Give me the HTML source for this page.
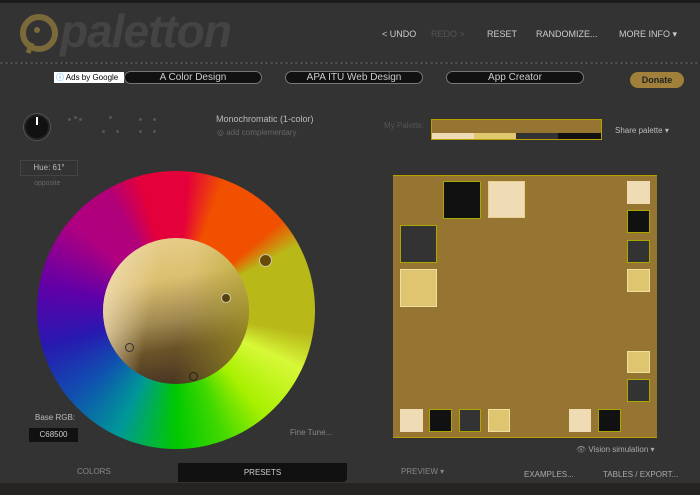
<!DOCTYPE html>
<html><head><style>
*{margin:0;padding:0;box-sizing:border-box}
body{width:700px;height:495px;background:#333;font-family:"Liberation Sans",sans-serif;position:relative;overflow:hidden;color:#bbb}
.a{position:absolute}
.nav{font-size:9px;color:#ccc;top:29px}
.pill{position:absolute;top:71px;height:13px;background:#111;border:1px solid #777;border-radius:7px;color:#ccc;font-size:10px;text-align:center;line-height:11px}
.sq{position:absolute;border:1px solid #a8a800}
.dot{position:absolute;width:3px;height:3px;border-radius:50%;background:#555}
</style></head><body>
<div class="a" style="left:0;top:0;width:700px;height:3px;background:#1c1c1c"></div>
<div class="a" style="left:0;top:62px;width:700px;height:2px;background:repeating-linear-gradient(90deg,#4a4a4a 0 3px,#2a2a2a 3px 5px)"></div>
<svg class="a" style="left:18px;top:13px" width="42" height="42"><circle cx="21" cy="20" r="16" fill="none" stroke="#7a6a3a" stroke-width="6"/><circle cx="19" cy="17" r="3" fill="#7a6a3a"/><path d="M14 30 L10 40" stroke="#7a6a3a" stroke-width="5"/></svg>
<div class="a" style="left:60px;top:4px;font-size:46px;font-weight:bold;font-style:italic;color:#444;letter-spacing:-1px">paletton</div>
<div class="a nav" style="left:382px">&lt; UNDO</div>
<div class="a nav" style="left:431px;color:#555">REDO &gt;</div>
<div class="a nav" style="left:487px">RESET</div>
<div class="a nav" style="left:536px">RANDOMIZE...</div>
<div class="a nav" style="left:619px">MORE INFO ▾</div>
<div class="a" style="left:54px;top:72px;width:70px;height:11px;background:#fff;color:#000;font-size:8px;line-height:11px;padding-left:2px"><span style="color:#29f">ⓘ</span> Ads by Google</div>
<div class="pill" style="left:124px;width:138px">A Color Design</div>
<div class="pill" style="left:285px;width:138px">APA ITU Web Design</div>
<div class="pill" style="left:446px;width:138px">App Creator</div>
<div class="a" style="left:630px;top:72px;width:54px;height:16px;background:#a0803a;border-radius:8px;color:#222;font-size:9px;font-weight:bold;text-align:center;line-height:16px">Donate</div>
<div class="a" style="left:24px;top:114px;width:26px;height:26px;border-radius:50%;background:#111;border:2px solid #222;box-shadow:0 0 0 1px #555"></div>
<div class="a" style="left:36px;top:117px;width:2px;height:8px;background:#fff"></div>
<div class="dot" style="left:68px;top:118px"></div><div class="dot" style="left:74px;top:116px"></div><div class="dot" style="left:79px;top:118px"></div>
<div class="dot" style="left:109px;top:116px"></div><div class="dot" style="left:102px;top:130px"></div><div class="dot" style="left:116px;top:130px"></div>
<div class="dot" style="left:139px;top:118px"></div><div class="dot" style="left:153px;top:118px"></div><div class="dot" style="left:139px;top:130px"></div><div class="dot" style="left:153px;top:130px"></div>
<div class="a" style="left:216px;top:114px;font-size:9px;color:#bbb">Monochromatic (1-color)</div>
<div class="a" style="left:217px;top:128px;font-size:8px;color:#666">◎ add complementary</div>
<div class="a" style="left:384px;top:121px;font-size:8px;color:#555">My Palette:</div>
<div class="a" style="left:431px;top:119px;width:171px;height:21px;background:#967432;border:1px solid #b8a000"></div>
<div class="a" style="left:432px;top:133px;width:42px;height:6px;background:#f0dcb4"></div>
<div class="a" style="left:474px;top:133px;width:42px;height:6px;background:#e0c870"></div>
<div class="a" style="left:516px;top:133px;width:42px;height:6px;background:#333"></div>
<div class="a" style="left:558px;top:133px;width:43px;height:6px;background:#111"></div>
<div class="a" style="left:615px;top:126px;font-size:8px;color:#bbb">Share palette ▾</div>
<div class="a" style="left:20px;top:160px;width:58px;height:16px;border:1px solid #444;font-size:8px;color:#bbb;text-align:center;line-height:14px">Hue: 61°</div>
<div class="a" style="left:34px;top:180px;font-size:7px;color:#666">opposite</div>
<div class="a" style="left:37px;top:171px;width:278px;height:278px;border-radius:50%;background:conic-gradient(from -30deg,#b0007a 0deg,#e4003a 15deg,#e4003a 35deg,#f05000 50deg,#f05000 80deg,#b8b818 92deg,#b8b818 130deg,#d8f838 145deg,#a8f000 170deg,#40d800 190deg,#00c800 210deg,#009898 235deg,#1050b0 260deg,#2818b0 285deg,#6000a8 310deg,#b00080 340deg,#b0007a 360deg)"></div>
<div class="a" style="left:103px;top:238px;width:146px;height:146px;border-radius:50%;background:linear-gradient(170deg,#e8d090 0%,#dcc070 30%,#a08850 55%,#6a5228 72%,#3a2a22 100%)"></div>
<div class="a" style="left:103px;top:238px;width:146px;height:146px;border-radius:50%;background:linear-gradient(100deg,#f0dcb4 0%,rgba(240,220,180,0) 35%,rgba(184,184,24,0) 55%,rgba(170,160,30,.7) 100%)"></div>
<div class="a" style="left:259px;top:254px;width:13px;height:13px;border-radius:50%;background:#6a4a08;border:1px solid #cca"></div>
<div class="a" style="left:221px;top:293px;width:10px;height:10px;border-radius:50%;background:#5a4010;border:1px solid #cca"></div>
<div class="a" style="left:125px;top:343px;width:9px;height:9px;border-radius:50%;border:1px solid #333"></div>
<div class="a" style="left:189px;top:372px;width:9px;height:9px;border-radius:50%;border:1px solid #222"></div>
<div class="a" style="left:35px;top:413px;font-size:8px;color:#bbb">Base RGB:</div>
<div class="a" style="left:29px;top:428px;width:49px;height:14px;background:#111;font-size:8px;color:#ccc;text-align:center;line-height:14px">C68500</div>
<div class="a" style="left:290px;top:428px;font-size:8px;color:#888">Fine Tune...</div>
<div class="a" style="left:77px;top:467px;font-size:8px;color:#888">COLORS</div>
<div class="a" style="left:178px;top:463px;width:169px;height:19px;background:#111;border-radius:0 0 4px 0;font-size:8px;color:#ccc;text-align:center;line-height:19px">PRESETS</div>
<div class="a" style="left:0;top:483px;width:700px;height:12px;background:#262422"></div>
<div class="a" style="left:393px;top:175px;width:264px;height:263px;background:#967432;border-top:1px solid #b8a000;border-bottom:1px solid #b8a000"></div>
<div class="sq" style="left:443px;top:181px;width:38px;height:38px;background:#111"></div>
<div class="sq" style="left:488px;top:181px;width:37px;height:37px;background:#f0dcb4;border-color:#e8d090"></div>
<div class="sq" style="left:400px;top:225px;width:37px;height:38px;background:#333"></div>
<div class="sq" style="left:400px;top:269px;width:37px;height:38px;background:#dfc570;border-color:#f0e0a0"></div>
<div class="sq" style="left:627px;top:181px;width:23px;height:23px;background:#f0dcb4;border-color:#f0dcb4"></div>
<div class="sq" style="left:627px;top:210px;width:23px;height:23px;background:#111"></div>
<div class="sq" style="left:627px;top:240px;width:23px;height:23px;background:#333"></div>
<div class="sq" style="left:627px;top:269px;width:23px;height:23px;background:#dfc570;border-color:#f0e0a0"></div>
<div class="sq" style="left:627px;top:351px;width:23px;height:22px;background:#dfc570;border-color:#f0e0a0"></div>
<div class="sq" style="left:627px;top:379px;width:23px;height:23px;background:#333"></div>
<div class="sq" style="left:400px;top:409px;width:23px;height:23px;background:#f0dcb4;border-color:#f0dcb4"></div>
<div class="sq" style="left:429px;top:409px;width:23px;height:23px;background:#111"></div>
<div class="sq" style="left:459px;top:409px;width:22px;height:23px;background:#333"></div>
<div class="sq" style="left:488px;top:409px;width:22px;height:23px;background:#dfc570;border-color:#f0e0a0"></div>
<div class="sq" style="left:569px;top:409px;width:22px;height:23px;background:#f0dcb4;border-color:#f0dcb4"></div>
<div class="sq" style="left:598px;top:409px;width:23px;height:23px;background:#111"></div>
<div class="a" style="left:576px;top:445px;font-size:8px;color:#888">👁 <span style="color:#aaa">Vision simulation ▾</span></div>
<div class="a" style="left:401px;top:467px;font-size:8px;color:#888">PREVIEW ▾</div>
<div class="a" style="left:524px;top:470px;font-size:8px;color:#aaa">EXAMPLES...</div>
<div class="a" style="left:603px;top:470px;font-size:8px;color:#aaa">TABLES / EXPORT...</div>
</body></html>
